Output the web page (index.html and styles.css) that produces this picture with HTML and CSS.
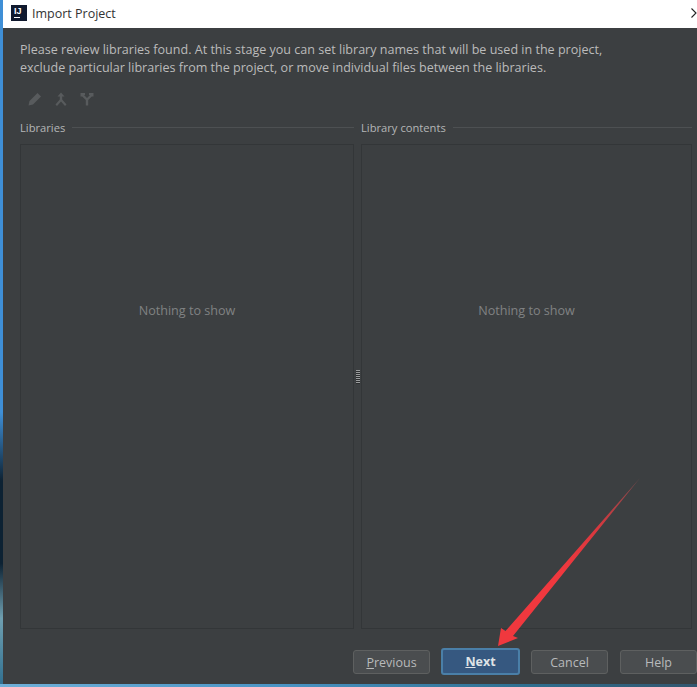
FILE: index.html
```html
<!DOCTYPE html>
<html lang="en">
<head>
    <meta charset="UTF-8">
    <title>Import Project</title>
    <link rel="stylesheet" href="styles.css">
</head>
<body>
    <div class="window">
        <div class="titlebar">
            <div class="app-logo"><span class="app-logo-text">IJ</span><span class="app-logo-bar"></span></div>
            <span class="title">Import Project</span>
            <svg class="close" width="6" height="10" viewBox="0 0 6 10"><path d="M0.5 0.5 L5 5 L0.5 9.5" fill="none" stroke="#222" stroke-width="1.1"/></svg>
        </div>
        <div class="content">
            <p class="intro">Please review libraries found. At this stage you can set library names that will be used in the project,<br>exclude particular libraries from the project, or move individual files between the libraries.</p>
            <div class="toolbar">
                <svg width="16" height="16" viewBox="0 0 16 16"><path d="M1.5 14.5 L2.5 10 L10.5 2 L14 5.5 L6 13.5 Z" fill="#585b5d"/></svg>
                <svg width="16" height="16" viewBox="0 0 16 16"><path d="M8 1.5 L11.5 5.5 H9.2 V8.5 L13.5 13.5 L12 15 L8 10.5 L4 15 L2.5 13.5 L6.8 8.5 V5.5 H4.5 Z" fill="#585b5d"/></svg>
                <svg width="16" height="16" viewBox="0 0 16 16"><path d="M1.5 2 H6 V4 H5 L8 7 L11 4 H10 V2 H14.5 V5.5 H12.8 L9.2 9 V14.5 H6.8 V9 L3.2 5.5 H1.5 Z" fill="#585b5d"/></svg>
            </div>
            <div class="panes">
                <section class="pane pane-left">
                    <div class="pane-head"><span>Libraries</span><span class="rule"></span></div>
                    <div class="pane-box">Nothing to show</div>
                </section>
                <div class="splitter"><span class="grip"></span></div>
                <section class="pane">
                    <div class="pane-head"><span>Library contents</span><span class="rule"></span></div>
                    <div class="pane-box">Nothing to show</div>
                </section>
            </div>
            <div class="buttons">
                <button class="btn" type="button"><u>P</u>revious</button>
                <button class="btn btn-primary" type="button"><u>N</u>ext</button>
                <button class="btn" type="button">Cancel</button>
                <button class="btn btn-help" type="button">Help</button>
            </div>
        </div>
    </div>
    <svg class="arrow" width="697" height="687" viewBox="0 0 697 687">
        <defs>
            <linearGradient id="arrowFill" x1="1" y1="0" x2="0" y2="1">
                <stop offset="0" stop-color="#7a4a4c"/>
                <stop offset="0.3" stop-color="#d8383e"/>
                <stop offset="0.55" stop-color="#f0383e"/>
            </linearGradient>
        </defs>
        <path d="M640 478 L513 636 L518 638 L498 646 L501 628 L505.5 631 Z" fill="url(#arrowFill)"/>
    </svg>
</body>
</html>
```

FILE: styles.css
```css
html, body {
    margin: 0;
    padding: 0;
}
body {
    position: relative;
    width: 697px;
    height: 687px;
    overflow: hidden;
    box-sizing: border-box;
    padding: 0 0 3px 3px;
    background:
        linear-gradient(90deg, #6fb0d8 0, #4a94c4 40%, #2f6f90 75%, #33566e 100%) left bottom / 100% 3px no-repeat,
        linear-gradient(180deg, #3f8fd6 0, #3f8fd6 60%, #0d2233 70%, #0d2233 82%, #6f9fb0 90%, #2f6f90 100%);
    font-family: "Open Sans", "Noto Sans", sans-serif;
}
.window {
    display: flex;
    flex-direction: column;
    height: 100%;
}
.titlebar {
    display: flex;
    align-items: center;
    height: 26px;
    flex-shrink: 0;
    padding: 0 0 2px 8px;
    background: #fff;
}
.app-logo {
    display: flex;
    flex-direction: column;
    width: 16px;
    height: 16px;
    padding: 2px 0 0 3px;
    box-sizing: border-box;
    background: #10192e;
}
.app-logo-text {
    font-family: "Liberation Sans", sans-serif;
    font-size: 9px;
    font-weight: bold;
    line-height: 8px;
    color: #fff;
}
.app-logo-bar {
    width: 6px;
    height: 1px;
    margin-top: 2px;
    background: #fff;
}
.title {
    flex: 1;
    margin-left: 5px;
    font-size: 12.5px;
    color: #333;
}
.content {
    display: flex;
    flex-direction: column;
    flex: 1;
    min-height: 0;
    padding: 13px 0 10px 17px;
    background: #3c3f41;
    color: #bbb;
    font-size: 12.5px;
}
.intro {
    margin: 0;
    line-height: 18px;
    font-size: 12.55px;
}
.toolbar {
    display: flex;
    gap: 10px;
    margin: 14px 0 0 7px;
    height: 16px;
}
.panes {
    display: flex;
    flex: 1;
    min-height: 0;
    margin-top: 11px;
    padding-right: 5px;
}
.pane {
    display: flex;
    flex-direction: column;
    flex: 1;
    min-width: 0;
}
.pane-left {
    flex: 0 0 334px;
}
.pane-head {
    display: flex;
    align-items: center;
    gap: 7px;
    height: 18px;
    font-size: 11.2px;
    color: #b4b6b7;
}
.rule {
    flex: 1;
    height: 1px;
    background: #4d5052;
}
.pane-box {
    display: flex;
    flex: 1;
    align-items: flex-start;
    justify-content: center;
    margin-top: 8px;
    padding-top: 157px;
    border: 1px solid #333638;
    background: #3c3f41;
    color: #808283;
    font-size: 12.6px;
}
.splitter {
    display: flex;
    align-items: center;
    justify-content: center;
    width: 7px;
    flex-shrink: 0;
}
.grip {
    width: 4px;
    height: 14px;
    margin-top: 7px;
    background: repeating-linear-gradient(180deg, #9a9c9d 0, #9a9c9d 1px, #2b2d2e 1px, #2b2d2e 2px);
}
.buttons {
    display: flex;
    justify-content: flex-end;
    gap: 11px;
    height: 24px;
    margin-top: 21px;
}
.btn {
    width: 77px;
    height: 24px;
    padding: 0;
    border: 1px solid #5e6060;
    border-radius: 3px;
    background: #4a4d4f;
    color: #b8babb;
    font-family: inherit;
    font-size: 12.5px;
}
.btn-primary {
    width: 79px;
    height: 27px;
    margin: -2px 0 -1px;
    border: 2px solid #4a7fa8;
    background: #365880;
    color: #dfe3e6;
    font-weight: bold;
}
.btn-help {
    margin-left: 1px;
}
.arrow {
    position: absolute;
    top: 0;
    left: 0;
}
```
